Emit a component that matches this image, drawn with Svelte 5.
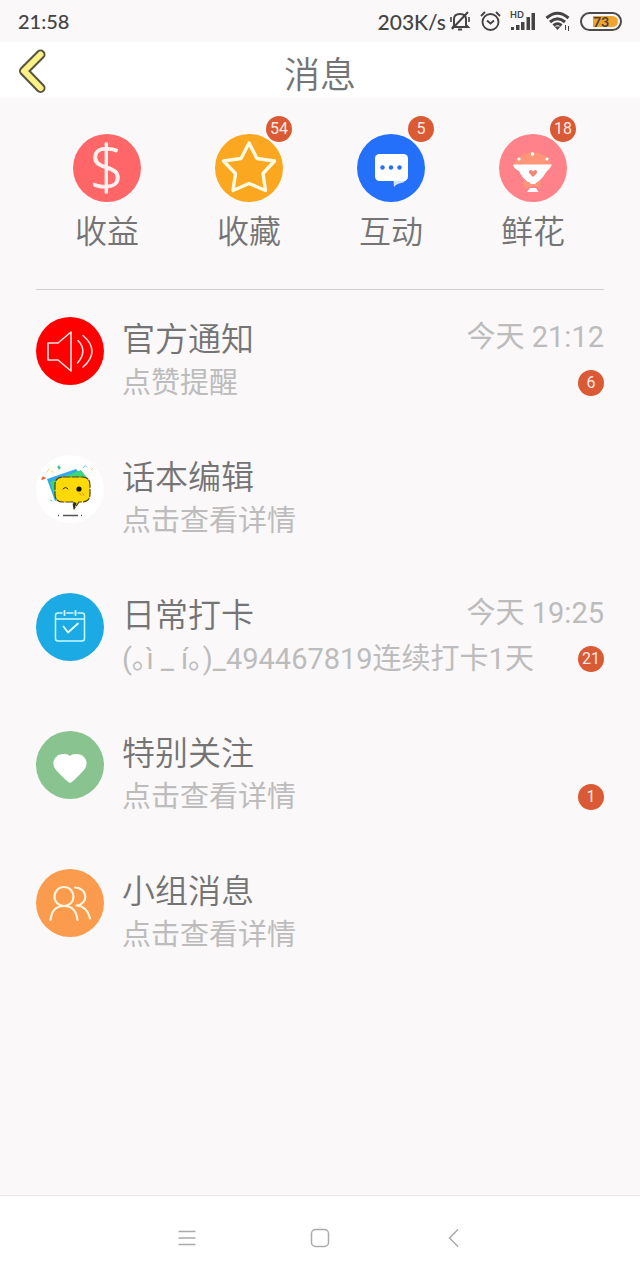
<script>
    const shortcuts = [
        {icon: 'dollar', label: '收益', color: '#ff6667', count: 0},
        {icon: 'star', label: '收藏', color: '#fba720', count: 54},
        {icon: 'chat', label: '互动', color: '#2470fb', count: 5},
        {icon: 'flower', label: '鲜花', color: '#ff8189', count: 18}
    ]

    const messages = [
        {icon: 'speaker', title: '官方通知', text: '点赞提醒', color: '#fe0000', time: '今天 21:12', count: 6},
        {icon: 'editor', title: '话本编辑', text: '点击查看详情', color: '#ffffff', time: '', count: 0},
        {icon: 'calendar', title: '日常打卡', text: '(｡ì _ í｡)_494467819连续打卡1天', color: '#1caae4', time: '今天 19:25', count: 21},
        {icon: 'heart', title: '特别关注', text: '点击查看详情', color: '#88c390', time: '', count: 1},
        {icon: 'people', title: '小组消息', text: '点击查看详情', color: '#fa9b4d', time: '', count: 0}
    ]
</script>

{#snippet picture(name)}
    <svg class="picture" viewBox="0 0 68 68" fill="none" stroke-linecap="round" stroke-linejoin="round" aria-hidden="true">
        {#if name === 'dollar'}
            <text class="dollar" x="34" y="56" text-anchor="middle">$</text>
        {:else if name === 'star'}
            <path d="M34 9L42 24.5L59.5 27L48 39.5L50.5 56.5L34 49.5L18 56.5L20.5 39.5L8.5 27L26 24.5Z" stroke="#fffbe2" stroke-width="3.400" />
        {:else if name === 'chat'}
            <path d="M36.500 46L37 53Q39 50 42 49.500Q47 49 50 45Z" fill="#d5e5ff" />
            <rect x="18" y="20" width="33" height="27" rx="4.500" fill="#fff" />
            <g fill="#2470fb">
                <circle cx="25.5" cy="33.5" r="2.200" />
                <circle cx="34" cy="33.5" r="2.200" />
                <circle cx="42.5" cy="33.5" r="2.200" />
            </g>
        {:else if name === 'flower'}
            <path d="M15 31Q15 24 21 23Q23 18 28 20Q31 16 35 19Q39 16 42 21Q50 20 52 31Z" fill="#ff9679" />
            <path d="M14 30.500H53Q51 35 48 37Q44 44 39 48H29Q23 44 20 37Q15 35 14 30.500Z" fill="#fff" />
            <path d="M34 43L30.500 39.500Q29 36 32 36Q33.500 36 34 37.500Q35 36 36.500 36Q39 36.500 37.500 39.500Z" fill="#f78377" />
            <path d="M24 47L33 49L42 47L41 54L34 52L26 54Z" fill="#ff9679" />
            <path d="M29 47H39L36 50H32ZM31 54H37L39.500 58H28Z" fill="#fff" />
            <g fill="#fff">
                <circle cx="20" cy="25" r="1.600" />
                <circle cx="33.5" cy="20" r="1.800" />
                <circle cx="48" cy="25" r="1.600" />
            </g>
        {:else if name === 'speaker'}
            <path d="M12 26H22L35 15V54L22 43H12ZM42 23.500Q52 34 41.500 46M47 18.500Q65 34 47 50" stroke="#ffe0e0" stroke-width="1.6" />
        {:else if name === 'editor'}
            <path d="M11 24L40 14L50 26L19 46Z" fill="#36a9e8" />
            <path d="M14 27L45 15L52 24L20 45Z" fill="#3fd47a" />
            <path d="M27 22H46Q54 22 54 30V39Q54 47 46 47H43L38 54L37 47H27Q19 47 19 39V30Q19 22 27 22Z" fill="#fdd908" stroke="#4a4212" stroke-width="1.200" stroke-dasharray="7 2" />
            <path d="M37.500 47L38 54L40.500 48" fill="#222" />
            <path d="M27 34Q29.500 31 32 34" stroke="#222" />
            <circle cx="43" cy="34" r="2.600" fill="#111" />
            <path d="M43 38l2 2m1-2l2 2" stroke="#f28a1d" />
            <path d="M22 60.500h1M27 60.500H42M45 60.500h1" stroke="#555" stroke-width="1.400" stroke-linecap="butt" />
            <path d="M6 24l3-1M7 22v2" stroke="#ee5a3a" stroke-width="1.500" />
            <path d="M11 17l2-3M15 16l2 1" stroke="#f4dc68" />
            <path d="M22 12l2 1M23 11v3" stroke="#37c27f" stroke-width="1.500" />
            <path d="M47 13q2-4 4-1" stroke="#71c5ee" />
            <path d="M55 15l2-2" stroke="#f2cf6b" />
            <path d="M14 45l2 1" stroke="#6ad0e8" />
        {:else if name === 'calendar'}
            <path d="M26 20H22Q19.500 20 19.500 22.500V45.500Q19.500 48 22 48H46Q48.500 48 48.500 45.500V22.500Q48.500 20 46 20H42M31 20H37M19.500 26H48.500" stroke="#c9fbff" stroke-width="1.5" />
            <path d="M28.500 18V22M39.500 18V22M27.500 33.500L32 39.500L42 30.500" stroke="#e6ffff" stroke-width="1.800" />
        {:else if name === 'heart'}
            <path d="M34 52Q31 51 20 39Q16 34 18 29Q21 22 29 23Q32 23 34 25Q36 23 39 23Q47 22 50 29Q52 34 48 39Q37 51 34 52Z" fill="#fff" />
        {:else if name === 'people'}
            <g stroke="#fff5df" stroke-width="2.200">
                <circle cx="28" cy="27.500" r="9.500" />
                <path d="M14.500 51Q16 37 28 37Q40 37 41.500 51M39 18.500C52 19 53 35 40.500 36.500Q51 37 54 49.500" />
            </g>
        {/if}
    </svg>
{/snippet}

<div class="screen">
    <div class="status">
        <span class="clock">21:58</span>
        <div class="indicators">
            <div class="speed">
                <span>203K/s</span>
                <svg width="22" height="22" viewBox="0 0 22 22" fill="none" stroke="#444" stroke-width="2" aria-hidden="true">
                    <path d="M5 15V9Q5 4 11 4Q17 4 17 9V15L19 17H4L6 14M9 19.500H13M3 19L19 2" />
                    <path d="M2 7V12M20 7V12" stroke-width="1.600" />
                </svg>
            </div>
            <svg width="21" height="22" viewBox="0 0 21 22" fill="none" stroke="#444" stroke-width="1.900" aria-hidden="true">
                <circle cx="10.500" cy="12" r="8" />
                <path d="M1 6L5 2M20 6L16 2M7 10.500L10.500 13.500L14 10.500" />
            </svg>
            <svg width="26" height="22" viewBox="0 0 26 22" fill="#444" aria-hidden="true">
                <text class="hd" x="0" y="8">HD</text>
                <path d="M1 17H4V20H1ZM6 15H9.500V20H6ZM11 12H14.500V20H11ZM16.500 7H20V20H16.500ZM21.500 3H25V20H21.500Z" />
            </svg>
            <svg width="26" height="22" viewBox="0 0 26 22" fill="none" stroke="#444" stroke-width="3" aria-hidden="true">
                <path d="M1.500 8Q12.500-1.500 23.500 8M5 12Q12.500 5.500 20 12M8.500 15.500Q12.500 12 16.500 15.500" />
                <path d="M12.500 20L9.500 16.500H15.500Z" fill="#444" stroke="none" />
                <path d="M20.500 20V15M23.500 16V21" stroke-width="1" />
            </svg>
            <span class="battery"><span class="level">73</span></span>
        </div>
    </div>

    <header>
        <button class="back" aria-label="返回">
            <svg width="32" height="48" viewBox="0 0 32 48" fill="none" stroke-linecap="round" stroke-linejoin="round" aria-hidden="true">
                <path d="M22.500 8.500L6 25L22.500 42" stroke="#56543f" stroke-width="10" />
                <path d="M22.500 8.500L6 25L22.500 42" stroke="#faf187" stroke-width="6" />
            </svg>
        </button>
        <h1>消息</h1>
    </header>

    <main>
        <nav class="shortcuts">
            {#each shortcuts as item (item.icon)}
                <button class="shortcut">
                    <span class="circle" style="background-color: {item.color}">
                        {@render picture(item.icon)}
                        {#if item.count}
                            <span class="badge corner">{item.count}</span>
                        {/if}
                    </span>
                    <span class="label">{item.label}</span>
                </button>
            {/each}
        </nav>

        <ul>
            {#each messages as item (item.icon)}
                <li>
                    <button class="message">
                        <span class="circle" style="background-color: {item.color}">
                            {@render picture(item.icon)}
                        </span>
                        <span class="body">
                            <span class="line top">
                                <span class="title">{item.title}</span>
                                <span class="time">{item.time}</span>
                            </span>
                            <span class="line">
                                <span class="text">{item.text}</span>
                                {#if item.count}
                                    <span class="badge">{item.count}</span>
                                {/if}
                            </span>
                        </span>
                    </button>
                </li>
            {/each}
        </ul>
    </main>

    <footer>
        <button aria-label="菜单">
            <svg width="20" height="20" viewBox="0 0 20 20" fill="none" stroke="#aaa" stroke-width="1.500" aria-hidden="true">
                <path d="M1.500 3.500H18.500M1.500 10H18.500M1.500 16.500H18.500" />
            </svg>
        </button>
        <button aria-label="主页">
            <svg width="20" height="20" viewBox="0 0 20 20" fill="none" stroke="#aaa" stroke-width="1.500" aria-hidden="true">
                <rect x="1.500" y="1.500" width="17" height="17" rx="4" />
            </svg>
        </button>
        <button aria-label="后退">
            <svg width="20" height="20" viewBox="0 0 20 20" fill="none" stroke="#aaa" stroke-width="1.500" aria-hidden="true">
                <path d="M15 1.500L6.500 10L15 18.500" />
            </svg>
        </button>
    </footer>
</div>

<style>
    :global(body) {
        background-color: #faf8f9;
    }

    .screen {
        display: flex;
        flex-direction: column;
        min-height: 100vh;
        font-family: Roboto, 'Noto Sans CJK SC', sans-serif;
        font-weight: 350;
        color: #747474;
    }

    button {
        padding: 0;
        border: none;
        background: none;
        font: inherit;
        color: inherit;
        cursor: pointer;
    }

    svg {
        display: block;
    }

    .status {
        display: flex;
        align-items: center;
        justify-content: space-between;
        height: 42px;
        padding: 0 18px;
        font-family: Lato, sans-serif;
        font-size: 21px;
        font-weight: 500;
        color: #444;
    }

    .clock {
        font-size: 20px;
    }

    .indicators {
        display: flex;
        align-items: center;
        gap: 9px;
    }

    .speed {
        display: flex;
        align-items: center;
        gap: 3px;
    }

    .hd {
        font-size: 9px;
        font-weight: 700;
    }

    .battery {
        box-sizing: border-box;
        width: 42px;
        height: 19px;
        padding: 2px;
        border: 2px solid #4b4b4b;
        border-radius: 10px;
    }

    .level {
        display: block;
        height: 11px;
        margin-left: 9px;
        border-radius: 0 6px 6px 0;
        background-color: #f3a32b;
        font-size: 14px;
        font-weight: 700;
        line-height: 11px;
    }

    header {
        display: grid;
        grid-template-columns: 1fr auto 1fr;
        align-items: center;
        height: 56px;
        padding: 0 18px;
        background-color: #fff;
    }

    .back {
        justify-self: start;
    }

    h1 {
        margin: 0;
        padding-top: 12px;
        font-size: 36px;
        font-weight: 350;
        line-height: 44px;
    }

    main {
        flex: 1;
        padding: 36px 36px 52px;
    }

    .shortcuts {
        display: grid;
        grid-template-columns: repeat(4, 1fr);
        padding-bottom: 34px;
        border-bottom: 1px solid #d0cecf;
    }

    .shortcut {
        display: flex;
        flex-direction: column;
        align-items: center;
        gap: 7px;
    }

    .circle {
        position: relative;
        flex: none;
        width: 68px;
        height: 68px;
        border-radius: 50%;
    }

    .picture {
        width: 68px;
        height: 68px;
        overflow: visible;
    }

    .dollar {
        font-family: 'Open Sans', sans-serif;
        font-size: 60px;
        font-weight: 300;
        fill: #fff0f0;
        stroke: #fff0f0;
        stroke-width: 1px;
    }

    .label {
        font-size: 32px;
        line-height: 46px;
    }

    .badge {
        flex: none;
        width: 26px;
        height: 26px;
        border-radius: 50%;
        background-color: #d95a35;
        color: #fbe9e4;
        font-size: 16px;
        font-weight: 400;
        line-height: 26px;
        text-align: center;
    }

    .corner {
        position: absolute;
        top: -18px;
        right: -9px;
    }

    ul {
        display: flex;
        flex-direction: column;
        gap: 52px;
        margin: 0;
        padding: 27px 0 0;
        list-style: none;
    }

    .message {
        display: flex;
        gap: 18px;
        width: 100%;
        text-align: left;
    }

    .body {
        flex: 1;
        min-width: 0;
    }

    .line {
        display: flex;
        align-items: center;
        justify-content: space-between;
    }

    .top {
        align-items: flex-start;
    }

    .title {
        font-size: 33px;
        line-height: 46px;
    }

    .time,
    .text {
        font-size: 29px;
        font-weight: 400;
        line-height: 40px;
        color: #bcbcbc;
    }

    footer {
        display: grid;
        grid-template-columns: repeat(3, 1fr);
        justify-items: center;
        height: 84px;
        padding: 0 120px;
        border-top: 1px solid #e8e6e7;
        background-color: #fff;
    }
</style>
